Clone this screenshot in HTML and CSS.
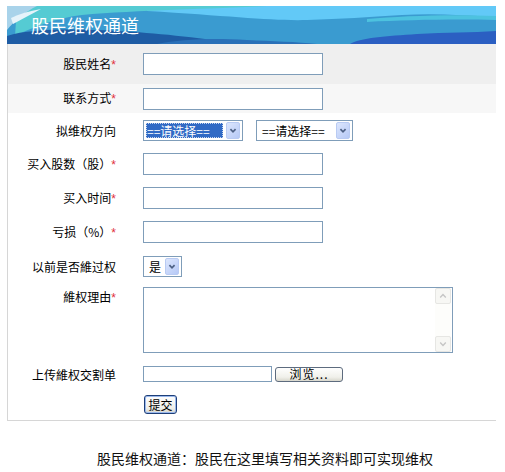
FILE: index.html
```html
<!DOCTYPE html>
<html lang="zh-CN">
<head>
    <meta charset="UTF-8">
    <title>股民维权通道</title>
    <link rel="stylesheet" href="styles.css">
</head>
<body>
<div class="panel">
    <div class="banner">
        <svg class="waves" viewBox="0 0 489 38" preserveAspectRatio="none">
            <rect width="489" height="38" fill="#3a9bd0"/>
            <path d="M140 0H489V11C455 9 425 7 395 9C360 11 335 13 300 14C265 15 225 10 140 5Z" fill="#62c9f7"/>
            <path d="M10 0H260C205 3 130 4 75 9C50 12 28 20 8 30Z" fill="#55cbd3"/>
            <path d="M0 0H30C18 6 8 14 0 24Z" fill="#a9d3ea"/>
            <path d="M4 12C12 8 22 5 34 3L6 18Z" fill="#e6f3fa"/>
            <path d="M0 38V30C25 22 70 23 110 25C150 27 185 31 235 38Z" fill="#1e5ca4"/>
            <path d="M150 38C175 33 205 32 240 34C265 35 290 36 310 38Z" fill="#2a70b8"/>
            <path d="M343 38C352 32 380 30 410 28C440 26 465 27 489 25V38Z" fill="#2b5fc2"/>
            <path d="M360 13C395 10 440 8 489 10V14C445 13 400 14 360 16Z" fill="#4dc2df"/>
        </svg>
        <h1 class="title">股民维权通道</h1>
    </div>
    <form class="form">
        <div class="row row-first">
            <label class="label" for="name">股民姓名<em>*</em></label>
            <input class="text-box" type="text" id="name">
        </div>
        <div class="row row-second">
            <label class="label" for="contact">联系方式<em>*</em></label>
            <input class="text-box" type="text" id="contact">
        </div>
        <div class="row">
            <span class="label">拟维权方向</span>
            <div class="select select-wide">
                <span class="value picked">==请选择==</span>
                <span class="arrow"><svg viewBox="0 0 14 17"><path d="M4 7l3 3 3-3" fill="none" stroke="#4d6185" stroke-width="2"/></svg></span>
            </div>
            <div class="select select-wide second">
                <span class="value">==请选择==</span>
                <span class="arrow"><svg viewBox="0 0 14 17"><path d="M4 7l3 3 3-3" fill="none" stroke="#4d6185" stroke-width="2"/></svg></span>
            </div>
        </div>
        <div class="row">
            <label class="label" for="shares">买入股数（股）<em>*</em></label>
            <input class="text-box" type="text" id="shares">
        </div>
        <div class="row">
            <label class="label" for="time">买入时间<em>*</em></label>
            <input class="text-box" type="text" id="time">
        </div>
        <div class="row">
            <label class="label" for="loss">亏损（%）<em>*</em></label>
            <input class="text-box" type="text" id="loss">
        </div>
        <div class="row">
            <span class="label">以前是否維过权</span>
            <div class="select select-small">
                <span class="value">是</span>
                <span class="arrow"><svg viewBox="0 0 14 17"><path d="M4 7l3 3 3-3" fill="none" stroke="#4d6185" stroke-width="2"/></svg></span>
            </div>
        </div>
        <div class="row row-tall">
            <label class="label" for="reason">維权理由<em>*</em></label>
            <div class="memo">
                <textarea class="memo-input" id="reason"></textarea>
                <div class="scrollbar">
                    <span class="scroll-btn"><svg viewBox="0 0 14 15"><path d="M4 9l3-3 3 3" fill="none" stroke="#c5c5c5" stroke-width="1.5"/></svg></span>
                    <span class="scroll-btn"><svg viewBox="0 0 14 15"><path d="M4 6l3 3 3-3" fill="none" stroke="#c5c5c5" stroke-width="1.5"/></svg></span>
                </div>
            </div>
        </div>
        <div class="row row-file">
            <span class="label">上传維权交割单</span>
            <span class="file-box"></span>
            <button class="btn btn-browse" type="button">浏览...</button>
        </div>
        <div class="row row-submit">
            <span class="label"></span>
            <button class="btn btn-submit" type="button">提交</button>
        </div>
    </form>
</div>
<p class="note">股民维权通道：股民在这里填写相关资料即可实现维权</p>
</body>
</html>
```

FILE: styles.css
```css
body{
    margin: 0;
    background: #fff;
    color: #000;
    font-family: "Noto Sans CJK SC", "Liberation Sans", sans-serif;
    font-size: 12px;
}
.panel{
    width: 489px;
    margin: 6px 0 0 7px;
}
.banner{
    display: grid;
    height: 38px;
}
.waves,.title{
    grid-area: 1 / 1;
}
.waves{
    width: 489px;
    height: 38px;
    display: block;
}
.title{
    margin: 0;
    padding-left: 24px;
    align-self: center;
    color: #fff;
    font-size: 18px;
    font-weight: normal;
    line-height: 24px;
    position: relative;
}
.form{
    margin: 0;
    border-left: 1px solid #d6d6d6;
    border-bottom: 1px solid #d6d6d6;
}
.row{
    display: flex;
    align-items: center;
    height: 34px;
}
.row-first{
    height: 40px;
    background: #efefef;
}
.row-second{
    height: 29px;
    background: #f7f7f7;
}
.row-tall{
    height: 76px;
    align-items: flex-start;
}
.row-file{
    height: 30px;
}
.row-submit{
    height: 31px;
}
.label{
    width: 108px;
    margin-right: 27px;
    text-align: right;
    white-space: nowrap;
    line-height: 17px;
}
.label em{
    font-style: normal;
    color: #e0303c;
    font-family: "Liberation Sans", sans-serif;
}
.row-tall .label{
    padding-top: 5px;
}
.text-box{
    box-sizing: border-box;
    width: 180px;
    height: 22px;
    margin: 0;
    border: 1px solid #7f9db9;
    background: #fff;
}
.select{
    box-sizing: border-box;
    display: flex;
    align-items: center;
    height: 21px;
    padding: 1px;
    border: 1px solid #7f9db9;
    background: #fff;
}
.select-wide{
    width: 100px;
}
.select-wide.second{
    width: 97px;
    margin-left: 13px;
}
.select-small{
    width: 39px;
}
.value{
    flex: 1;
    margin-left: 1px;
    padding-left: 3px;
    height: 15px;
    line-height: 15px;
    white-space: nowrap;
}
.select-small .value{
    padding-left: 3px;
}
.picked{
    margin-right: 3px;
    padding-left: 1px;
    background: #316ac5;
    color: #fff;
    outline: 1px dotted #c9d6ee;
    outline-offset: -1px;
}
.arrow{
    box-sizing: border-box;
    width: 14px;
    height: 17px;
    margin-right: 1px;
    border: 1px solid #b9cbf3;
    border-radius: 2px;
    background: linear-gradient(135deg, #dce6fd, #b6c9f6);
}
.arrow svg{
    display: block;
    width: 12px;
    height: 15px;
}
.memo{
    box-sizing: border-box;
    display: flex;
    width: 310px;
    height: 66px;
    margin-top: 4px;
    border: 1px solid #7f9db9;
    background: #fff;
}
.memo-input{
    flex: 1;
    margin: 0;
    border: 0;
    resize: none;
    outline: none;
}
.scrollbar{
    display: flex;
    flex-direction: column;
    justify-content: space-between;
    width: 16px;
    margin-right: 1px;
    background: #fdfdfb;
}
.scroll-btn{
    box-sizing: border-box;
    height: 16px;
    border: 1px solid #e6e6e3;
    border-radius: 2px;
    background: #f7f7f4;
}
.scroll-btn svg{
    display: block;
    width: 14px;
    height: 14px;
}
.file-box{
    box-sizing: border-box;
    width: 129px;
    height: 16px;
    margin-right: 3px;
    border: 1px solid #7f9db9;
    background: #fff;
}
.btn{
    box-sizing: border-box;
    margin: 0;
    padding: 0;
    border-radius: 3px;
    font-family: "Noto Sans CJK SC", "Liberation Sans", sans-serif;
    font-size: 12px;
    color: #000;
    background: linear-gradient(#fefefe, #f0f0ea 70%, #d8d7cd);
}
.btn-browse{
    width: 68px;
    height: 15px;
    line-height: 12px;
    border: 1px solid #5d6b7e;
    letter-spacing: 1px;
}
.btn-submit{
    width: 33px;
    height: 19px;
    margin-left: 1px;
    line-height: 15px;
    border: 1px solid #1e3f78;
    box-shadow: inset 0 0 0 1px #9ab8ec;
}
.note{
    margin: 27px 0 0;
    padding-left: 97px;
    font-size: 14px;
    line-height: 20px;
    color: #111;
}
```
